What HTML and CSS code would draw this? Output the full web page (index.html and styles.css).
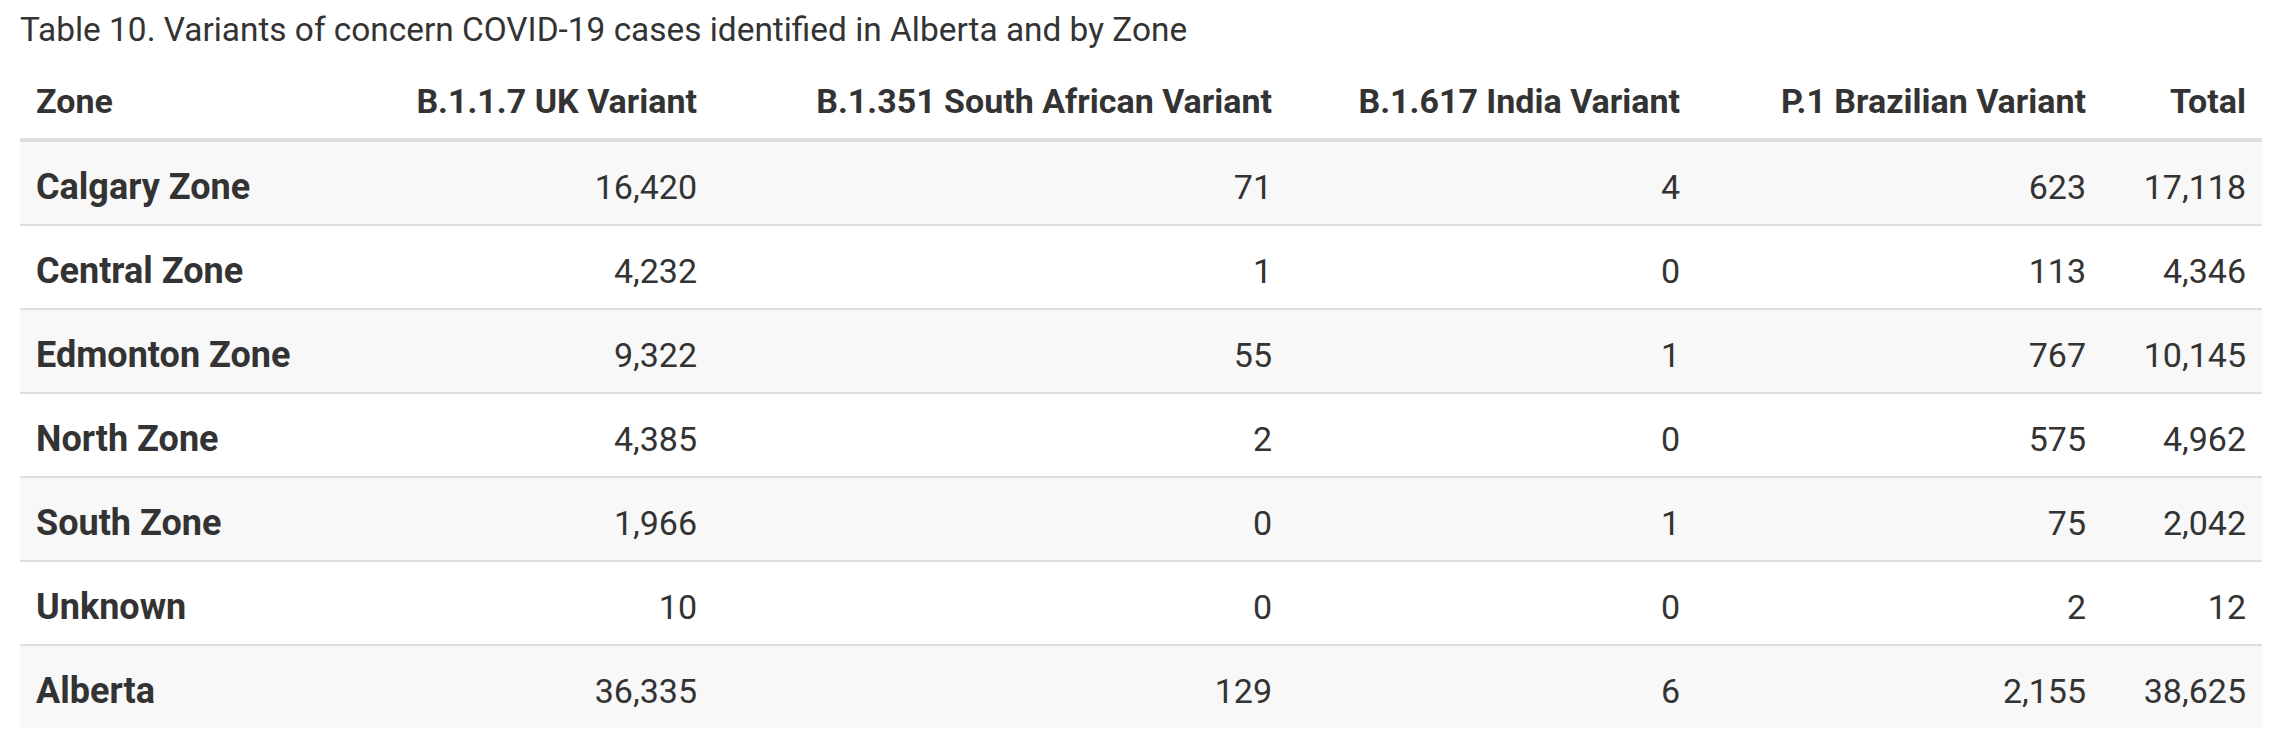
FILE: index.html
```html
<!DOCTYPE html>
<html lang="en">
<head>
<meta charset="utf-8">
<title>Table 10. Variants of concern</title>
<link rel="stylesheet" href="styles.css">
</head>
<body>
<div class="wrap">
  <div class="caption">Table 10. Variants of concern COVID-19 cases identified in Alberta and by Zone</div>
  <table class="data">
    <colgroup>
      <col class="c0"><col class="c1"><col class="c2"><col class="c3"><col class="c4"><col class="c5">
    </colgroup>
    <thead>
      <tr>
        <th class="lbl">Zone</th>
        <th>B.1.1.7 UK Variant</th>
        <th>B.1.351 South African Variant</th>
        <th>B.1.617 India Variant</th>
        <th>P.1 Brazilian Variant</th>
        <th>Total</th>
      </tr>
    </thead>
    <tbody>
      <tr><th class="lbl">Calgary Zone</th><td>16,420</td><td>71</td><td>4</td><td>623</td><td>17,118</td></tr>
      <tr><th class="lbl">Central Zone</th><td>4,232</td><td>1</td><td>0</td><td>113</td><td>4,346</td></tr>
      <tr><th class="lbl">Edmonton Zone</th><td>9,322</td><td>55</td><td>1</td><td>767</td><td>10,145</td></tr>
      <tr><th class="lbl">North Zone</th><td>4,385</td><td>2</td><td>0</td><td>575</td><td>4,962</td></tr>
      <tr><th class="lbl">South Zone</th><td>1,966</td><td>0</td><td>1</td><td>75</td><td>2,042</td></tr>
      <tr><th class="lbl">Unknown</th><td>10</td><td>0</td><td>0</td><td>2</td><td>12</td></tr>
      <tr><th class="lbl">Alberta</th><td>36,335</td><td>129</td><td>6</td><td>2,155</td><td>38,625</td></tr>
    </tbody>
  </table>
</div>
</body>
</html>
```
FILE: styles.css
```css
html, body {
  margin: 0;
  padding: 0;
  background: #ffffff;
}
body {
  font-family: Roboto, "Liberation Sans", sans-serif;
  color: #333333;
}
.wrap {
  padding-left: 20px;
}
.caption {
  font-size: 33.4px;
  line-height: 60px;
  height: 60px;
  color: #333333;
  white-space: nowrap;
}
.data {
  border-collapse: collapse;
  table-layout: fixed;
  width: 2242px;
}
.c0 { width: 300px; }
.c1 { width: 393px; }
.c2 { width: 575px; }
.c3 { width: 408px; }
.c4 { width: 406px; }
.c5 { width: 160px; }
.data thead th {
  font-size: 34px;
  font-weight: 700;
  line-height: 38px;
  padding: 22px 16px 18px;
  text-align: right;
  border-bottom: 4px solid #dddddd;
  white-space: nowrap;
}
.data th.lbl {
  text-align: left;
}
.data tbody th,
.data tbody td {
  font-size: 34px;
  line-height: 38px;
  padding: 26px 16px 18px;
  white-space: nowrap;
}
.data tbody th {
  font-size: 36px;
  font-weight: 700;
}
.data tbody td {
  font-weight: 400;
  text-align: right;
}
.data tbody tr {
  border-bottom: 2px solid #dfdfdf;
}
.data tbody tr:last-child {
  border-bottom: none;
}
.data tbody tr:nth-child(odd) {
  background: #f8f8f8;
}
```
